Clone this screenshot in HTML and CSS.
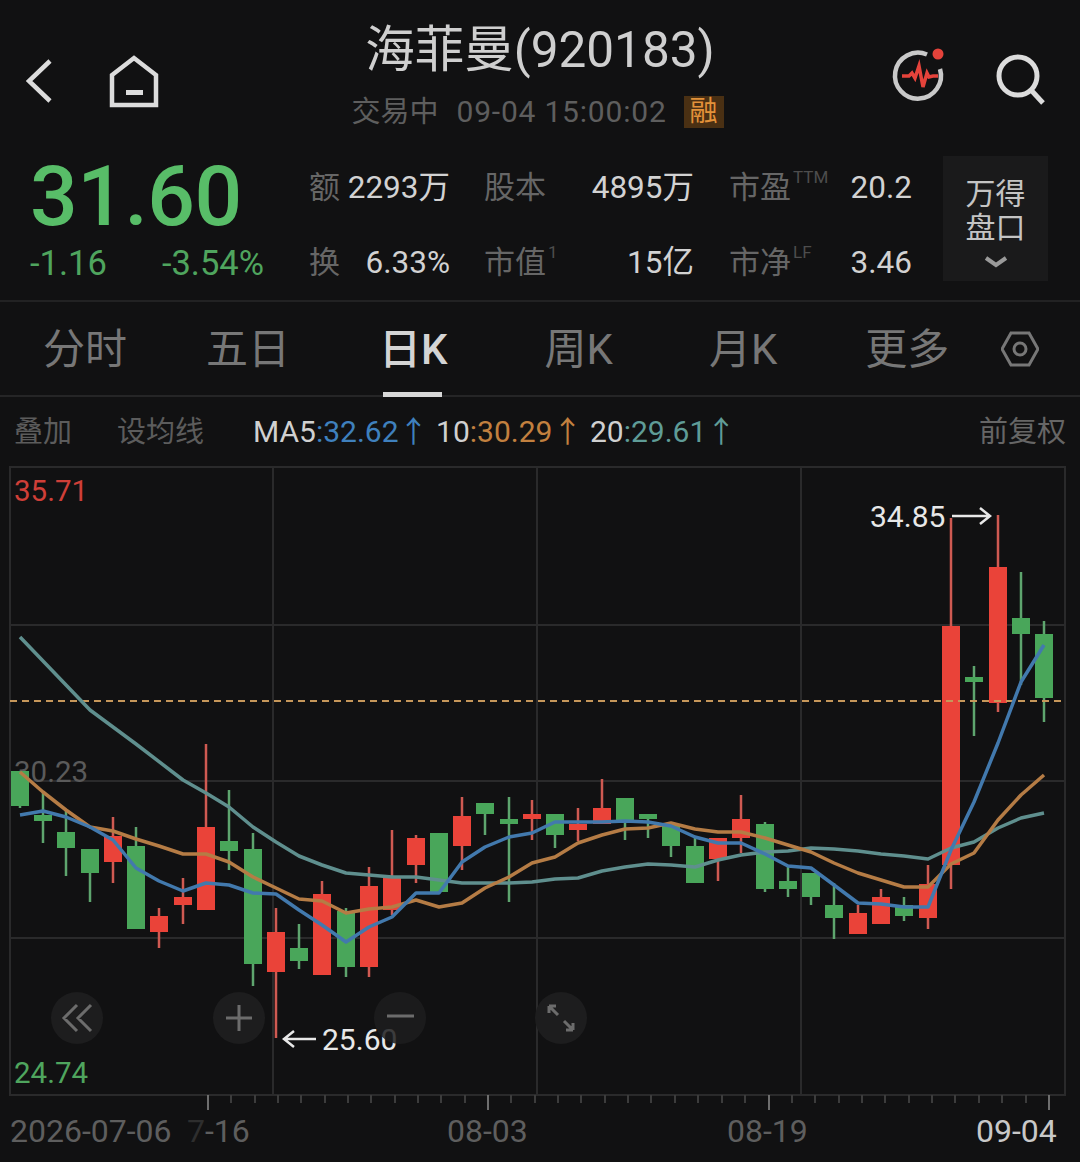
FILE: index.html
```html
<!DOCTYPE html>
<html lang="zh-CN">
<head>
<meta charset="utf-8">
<title>海菲曼(920183)</title>
<link rel="stylesheet" href="styles.css">
</head>
<body>
<main class="page">
  <header class="top">
    <div class="nav nav-left">
      <svg class="ico-back" width="28" height="46" viewBox="0 0 28 46"><path d="M24 3 3 23l21 20"/></svg>
      <svg class="ico-home" width="52" height="54" viewBox="0 0 52 54"><path d="M4 50V20L26 3l22 17v30Z"/><rect x="18" y="35" width="17" height="5"/></svg>
    </div>
    <div class="title-block">
      <h1 class="title">海菲曼(920183)</h1>
      <div class="sub"><span class="sub-state">交易中</span><span class="sub-time">09-04 15:00:02</span><span class="badge">融</span></div>
    </div>
    <div class="nav nav-right">
      <svg class="ico-pulse" width="56" height="56" viewBox="0 0 56 56">
        <path class="ring" d="M36 7.5A23 23 0 1 0 49 22"/>
        <circle class="dot" cx="47" cy="7" r="5.5"/>
        <path class="beat" d="M11 29h7l3-3 3 5 4-12 4 21 4-14 2 4 4-1h5"/>
      </svg>
      <svg class="ico-search" width="54" height="56" viewBox="0 0 54 56"><circle cx="25" cy="24" r="19"/><path d="m38 38 12 13"/></svg>
    </div>
  </header>

  <section class="quote">
    <div class="price-col">
      <div class="price">31.60</div>
      <div class="changes"><span>-1.16</span><span>-3.54%</span></div>
    </div>
    <div class="stats">
      <span class="lbl lbl-a">额</span><span class="val val-a">2293万</span>
      <span class="lbl">股本</span><span class="val">4895万</span>
      <span class="lbl">市盈<sup>TTM</sup></span><span class="val">20.2</span>
      <span class="lbl lbl-a">换</span><span class="val val-a">6.33%</span>
      <span class="lbl">市值<sup>1</sup></span><span class="val">15亿</span>
      <span class="lbl">市净<sup>LF</sup></span><span class="val">3.46</span>
    </div>
    <div class="panel">
      <span>万得</span><span>盘口</span>
      <svg width="24" height="12" viewBox="0 0 24 12"><path d="m2 2 10 7 10-7"/></svg>
    </div>
  </section>

  <nav class="tabs">
    <span class="tab tab-1">分时</span>
    <span class="tab tab-2">五日</span>
    <span class="tab tab-3 active">日K</span>
    <span class="tab tab-4">周K</span>
    <span class="tab tab-5">月K</span>
    <span class="tab tab-6">更多</span>
    <svg class="ico-hex" width="38" height="36" viewBox="0 0 38 36"><path d="M10 2h18l9 16-9 16H10L1 18Z"/><circle cx="19" cy="18" r="6"/></svg>
  </nav>

  <div class="toolbar">
    <span class="tool tool-1">叠加</span>
    <span class="tool tool-2">设均线</span>
    <div class="ma">
      <span class="ma-item">MA5<i class="c-blue">:32.62↑</i></span>
      <span class="ma-item">10<i class="c-orange">:30.29↑</i></span>
      <span class="ma-item">20<i class="c-teal">:29.61↑</i></span>
    </div>
    <span class="tool tool-r">前复权</span>
  </div>

  <svg class="chart" width="1080" height="702" viewBox="0 460 1080 702">
    <g class="grid">
      <rect x="10" y="467" width="1055" height="628"/>
      <path d="M10 625H1065M10 781H1065M10 938H1065M273 467V1095M537 467V1095M801 467V1095"/>
    </g>
    <text class="axis a-mid" x="14" y="782">30.23</text>
    <g class="wick-g">
      <path d="M20 771V808M43 792V843M66 810V876M90 849V902M136 827V929M229 790V870M253 833V986M299 924V969M346 908V977M439 833V892M485 803V835M509 797V902M555 814V848M625 798V840M648 814V838M671 824V857M695 838V883M765 822V892M788 866V897M811 873V905M834 883V939M904 897V921M974 666V736M1021 572V685M1044 621V722"/>
    </g>
    <g class="wick-r">
      <path d="M113 817V883M159 908V948M183 878V924M206 744V910M276 908V1038M322 881V975M369 867V977M392 830V915M416 835V883M462 797V870M532 800V840M578 808V841M602 779V824M718 838V881M741 795V853M858 905V934M881 889V924M928 865V929M951 518V889M998 515V712"/>
    </g>
    <g class="up">
      <rect x="104" y="836" width="18" height="26"/><rect x="150" y="916" width="18" height="16"/><rect x="174" y="897" width="18" height="8"/><rect x="197" y="827" width="18" height="83"/><rect x="267" y="932" width="18" height="40"/><rect x="313" y="894" width="18" height="81"/><rect x="360" y="886" width="18" height="81"/><rect x="383" y="877" width="18" height="33"/><rect x="407" y="838" width="18" height="27"/><rect x="453" y="816" width="18" height="30"/><rect x="523" y="814" width="18" height="5"/><rect x="569" y="824" width="18" height="6"/><rect x="593" y="808" width="18" height="16"/><rect x="709" y="838" width="18" height="21"/><rect x="732" y="819" width="18" height="19"/><rect x="849" y="913" width="18" height="21"/><rect x="872" y="897" width="18" height="27"/><rect x="919" y="884" width="18" height="34"/><rect x="942" y="626" width="18" height="239"/><rect x="989" y="567" width="18" height="136"/>
    </g>
    <g class="down">
      <rect x="11" y="771" width="18" height="35"/><rect x="34" y="815" width="18" height="6"/><rect x="57" y="832" width="18" height="16"/><rect x="81" y="849" width="18" height="24"/><rect x="127" y="846" width="18" height="83"/><rect x="220" y="841" width="18" height="10"/><rect x="244" y="849" width="18" height="115"/><rect x="290" y="948" width="18" height="13"/><rect x="337" y="911" width="18" height="56"/><rect x="430" y="833" width="18" height="59"/><rect x="476" y="803" width="18" height="11"/><rect x="500" y="819" width="18" height="5"/><rect x="546" y="814" width="18" height="21"/><rect x="616" y="798" width="18" height="24"/><rect x="639" y="814" width="18" height="5"/><rect x="662" y="824" width="18" height="22"/><rect x="686" y="846" width="18" height="37"/><rect x="756" y="824" width="18" height="65"/><rect x="779" y="881" width="18" height="8"/><rect x="802" y="873" width="18" height="24"/><rect x="825" y="905" width="18" height="13"/><rect x="895" y="905" width="18" height="11"/><rect x="965" y="677" width="18" height="5"/><rect x="1012" y="618" width="18" height="16"/><rect x="1035" y="634" width="18" height="64"/>
    </g>
    <line class="last" x1="10" y1="701" x2="1062" y2="701"/>
    <polyline class="ma20" points="20,637 90,710 136,744 183,780 206,793 229,807 253,827 276,842 299,856 322,865 346,873 369,875 392,877 416,877 439,880 462,883 485,883 509,883 532,882 555,879 578,878 602,871 625,867 648,864 671,865 695,867 718,860 741,855 765,852 788,851 811,848 834,849 858,851 881,854 904,856 928,859 951,848 974,842 998,828 1021,818 1044,813"/>
    <polyline class="ma10" points="20,772 43,792 66,810 90,827 113,831 136,839 159,846 183,854 206,854 229,862 253,877 276,888 299,899 322,901 346,913 369,909 392,907 416,900 439,907 462,903 485,888 509,877 532,863 555,857 578,843 602,835 625,829 648,828 671,823 695,829 718,832 741,832 765,838 788,845 811,852 834,863 858,873 881,880 904,887 928,887 951,864 974,853 998,820 1021,795 1044,775"/>
    <polyline class="ma5" points="20,815 43,811 66,817 90,827 113,840 136,868 159,881 183,891 206,883 229,885 253,893 276,894 299,910 322,925 346,942 369,927 392,917 416,893 439,893 462,862 485,847 509,837 532,833 555,822 578,822 602,822 625,821 648,822 671,826 695,837 718,843 741,843 765,854 788,866 811,868 834,885 858,903 881,904 904,907 928,907 951,850 974,802 998,743 1021,682 1044,645"/>
    <g class="ticks-s">
      <path d="M231 1095v8M255 1095v8M278 1095v8M301 1095v8M325 1095v8M348 1095v8M371 1095v8M395 1095v8M418 1095v8M441 1095v8M465 1095v8M511 1095v8M535 1095v8M558 1095v8M581 1095v8M605 1095v8M628 1095v8M651 1095v8M675 1095v8M698 1095v8M722 1095v8M745 1095v8M792 1095v8M815 1095v8M839 1095v8M862 1095v8M885 1095v8M909 1095v8M932 1095v8M955 1095v8M979 1095v8M1002 1095v8M1026 1095v8"/>
    </g>
    <path class="ticks-l" d="M208 1095v15M488 1095v15M769 1095v15M1049 1095v15"/>
    <text class="axis a-high" x="14" y="501">35.71</text>
    <text class="axis a-low" x="14" y="1083">24.74</text>
    <text class="mark" x="870" y="527">34.85</text>
    <path class="arrow" d="M952 516H990M980 508l10 8-10 8"/>
    <path class="arrow" d="M316 1039H284M294 1031l-10 8 10 8"/>
    <text class="mark" x="322" y="1050">25.60</text>
    <g class="btn">
      <circle cx="77" cy="1018" r="26"/><circle cx="239" cy="1018" r="26"/><circle class="btn-over" cx="400" cy="1018" r="26"/><circle cx="561" cy="1018" r="26"/>
    </g>
    <path class="btn-ico" d="M77 1005 64 1018l13 13M91 1005 78 1018l13 13M239 1005v26M226 1018h26M387 1016h27M549 1006l7 0M549 1006l0 7M549 1006l9 9M573 1030l-7 0M573 1030l0-7M573 1030l-9-9"/>
    <text class="date" x="10" y="1142">2026-07-06</text>
    <text class="date" x="187" y="1142"><tspan class="date-dim">7</tspan>-16</text>
    <text class="date" x="447" y="1142">08-03</text>
    <text class="date" x="727" y="1142">08-19</text>
    <text class="date date-now" x="976" y="1142">09-04</text>
  </svg>
</main>
</body>
</html>
```
FILE: styles.css
```css
* { box-sizing: border-box; }
html, body { margin: 0; padding: 0; background: #111112; }
body { font-family: Roboto, "Noto Sans CJK SC", sans-serif; color: #d4d4d4; }
.page { width: 1080px; height: 1162px; overflow: hidden; background: #111112; }

.top { height: 156px; display: grid; grid-template-columns: 1fr auto 1fr; }
.nav { display: flex; align-items: flex-start; }
.nav-left { padding: 55px 0 0 26px; gap: 54px; }
.nav-right { justify-content: flex-end; padding: 47px 33px 0 0; gap: 46px; }
.ico-back path { fill: none; stroke: #dcdcdc; stroke-width: 4.5; }
.ico-back { margin-top: 3px; }
.ico-home path { fill: none; stroke: #dcdcdc; stroke-width: 4.5; }
.ico-home rect { fill: #dcdcdc; }
.ico-pulse .ring { fill: none; stroke: #c9c9c9; stroke-width: 4.5; }
.ico-pulse .dot { fill: #e5433b; }
.ico-pulse .beat { fill: none; stroke: #e5433b; stroke-width: 3.5; }
.ico-search { margin-top: 5px; }
.ico-search circle, .ico-search path { fill: none; stroke: #dcdcdc; stroke-width: 5; }

.title-block { display: flex; flex-direction: column; align-items: center; }
.title { margin: 20px 0 0; font-size: 49.5px; line-height: 60px; font-weight: 400; color: #cfcfcf; white-space: nowrap; }
.sub { display: flex; align-items: center; margin: 15px 5px 0 0; color: #5e5e5e; font-size: 29px; line-height: 34px; white-space: nowrap; }
.sub-time { margin-left: 18px; font-size: 30px; letter-spacing: 0.8px; }
.badge { margin-left: 17px; width: 40px; height: 32px; background: #4a3013; color: #e3923a; font-size: 28px; line-height: 32px; text-align: center; }

.quote { height: 144px; display: flex; }
.price-col { width: 309px; padding-left: 30px; }
.price { font-size: 84px; line-height: 80px; margin-top: 1px; color: #58bd68; font-weight: 500; letter-spacing: -0.5px; }
.changes { display: flex; justify-content: space-between; width: 234px; margin-top: 7px; color: #4fa55e; font-size: 34.5px; line-height: 38px; }

.stats { width: 603px; height: 126px; display: grid; grid-template-columns: 32px 109px 98px 146px 99px 119px; grid-auto-rows: 75px; margin-top: -6px; align-items: center; }
.lbl { color: #666; font-size: 31px; line-height: 38px; white-space: nowrap; padding-left: 35px; }
.lbl-a { padding-left: 0; }
.lbl:not(.lbl-a):nth-child(3), .lbl:not(.lbl-a):nth-child(9) { padding-left: 34px; }
.val { color: #d2d2d2; font-size: 31.5px; line-height: 38px; text-align: right; white-space: nowrap; }
.lbl sup { color: #4d4d4d; font-size: 17px; line-height: 0; vertical-align: 15px; margin-left: 2px; }
.panel { width: 105px; height: 125px; margin-left: 31px; background: #1a1a1b; display: flex; flex-direction: column; align-items: center; padding-top: 21px; color: #c4c4c4; font-size: 30px; line-height: 34px; }
.panel svg { margin-top: 11px; }
.panel path { fill: none; stroke: #9a9a9a; stroke-width: 4; }

.tabs { height: 97px; border-top: 2px solid #222223; border-bottom: 2px solid #252526; display: flex; position: relative; padding-left: 43px; align-items: center; color: #777; font-size: 42px; }
.tab { white-space: nowrap; line-height: 50px; margin-top: 2px; }
.tab-2 { margin-left: 79px; }
.tab-3 { margin-left: 89px; color: #d4d4d4; font-weight: 500; }
.tab-3::after { content: ""; position: absolute; left: 383px; bottom: -2px; width: 59px; height: 5px; background: #d8d8d8; }
.tab-4 { margin-left: 97px; }
.tab-5 { margin-left: 96px; }
.tab-6 { margin-left: 88px; }
.ico-hex { margin-left: 52px; }
.ico-hex path, .ico-hex circle { fill: none; stroke: #777; stroke-width: 3; }

.toolbar { height: 63px; display: flex; align-items: center; padding: 0 14px; font-size: 29px; color: #5c5c5c; }
.tool { white-space: nowrap; }
.tool-2 { margin-left: 45px; }
.tool-r { margin-left: auto; color: #666; }
.ma { display: flex; margin-left: 49px; gap: 7.5px; font-size: 30px; color: #d0d0d0; white-space: nowrap; }
.ma i { font-style: normal; }
.c-blue { color: #3f80bd; }
.c-orange { color: #c2803f; }
.c-teal { color: #5f9c97; }

.chart { display: block; }
.grid rect, .grid path { fill: none; stroke: #2a2a2b; stroke-width: 2; }
.wick-g path { fill: none; stroke: #5ea56e; stroke-width: 2.5; }
.wick-r path { fill: none; stroke: #cf5a52; stroke-width: 2.5; }
.up rect { fill: #ea4339; }
.down rect { fill: #49a65a; }
.last { stroke: #c6975a; stroke-width: 2; stroke-dasharray: 7 5; }
.ma5, .ma10, .ma20 { fill: none; stroke-width: 3.5; stroke-linejoin: round; }
.ma5 { stroke: #4279ad; }
.ma10 { stroke: #b57c45; }
.ma20 { stroke: #5f8f8e; }
.ticks-s path { fill: none; stroke: #3c3c3c; stroke-width: 2; }
.ticks-l { fill: none; stroke: #6e6e6e; stroke-width: 2; }
.axis { font-size: 29.5px; font-family: Roboto, sans-serif; }
.a-high { fill: #cf3f38; }
.a-mid { fill: #5a5a5a; }
.a-low { fill: #4fa55e; }
.mark { fill: #e8e8e8; font-size: 30px; font-family: Roboto, sans-serif; }
.arrow { fill: none; stroke: #e8e8e8; stroke-width: 2.5; }
.btn circle { fill: #1d1d1e; }
.btn .btn-over { fill-opacity: 0.85; }
.btn-ico { fill: none; stroke: #6c6c6c; stroke-width: 3; }
.date { fill: #5e5e5e; font-size: 32px; font-family: Roboto, sans-serif; }
.date-dim { fill: #2e2e2e; }
.date-now { fill: #c8c8c8; }
```
